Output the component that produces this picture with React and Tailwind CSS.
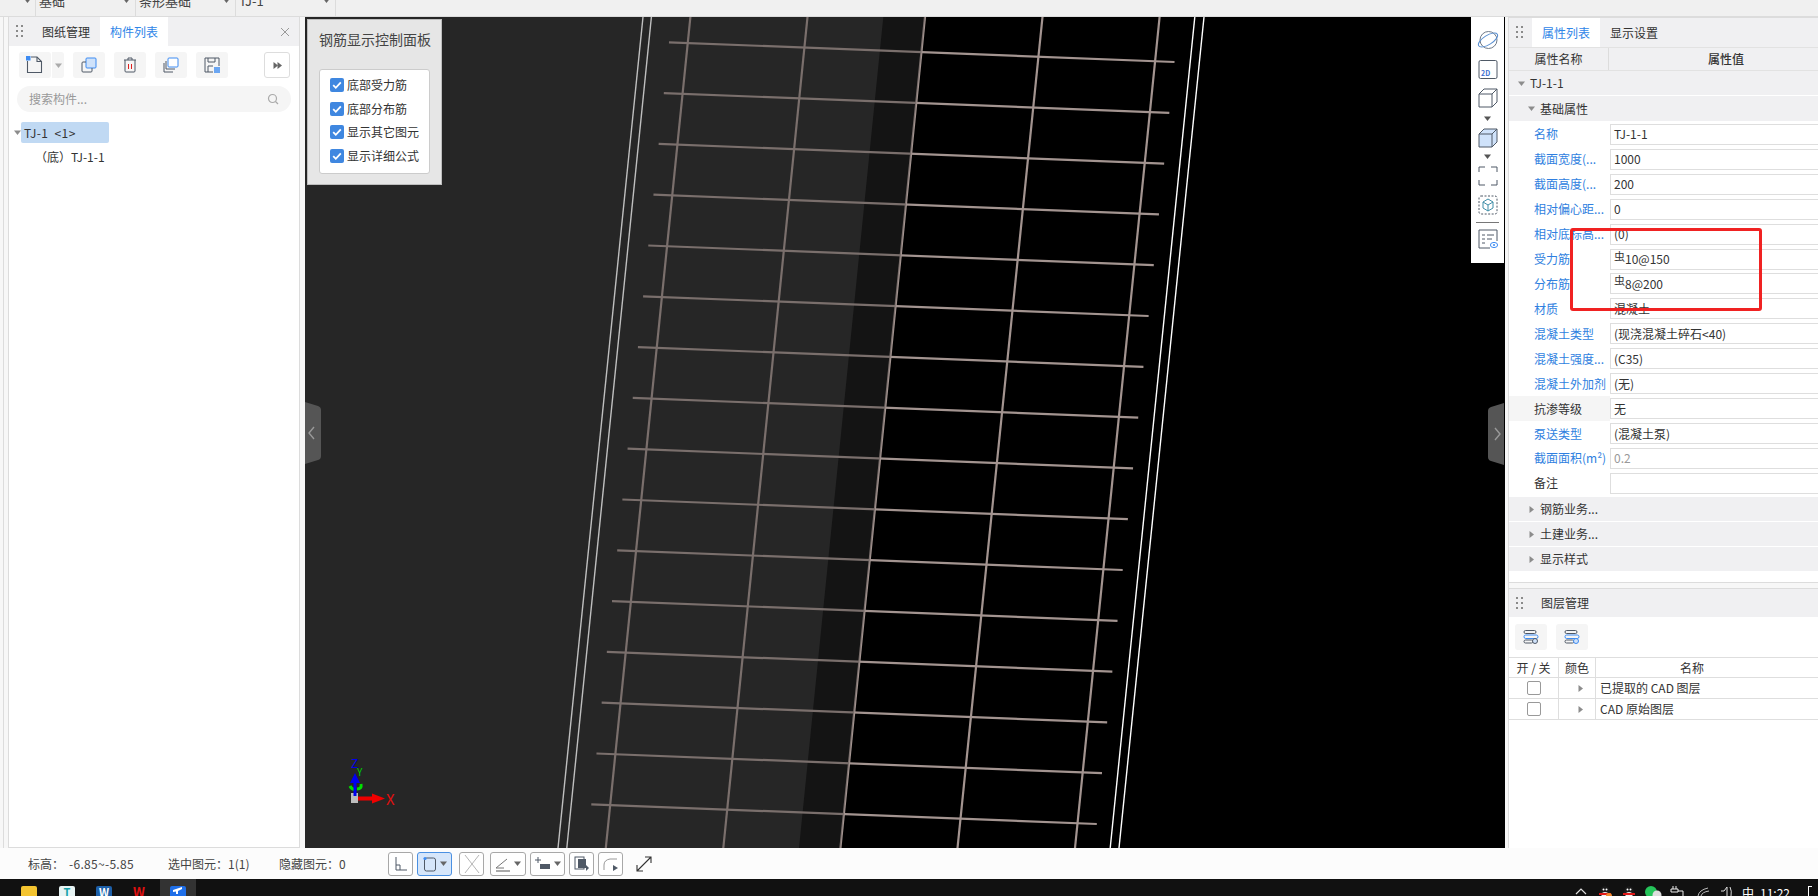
import React from 'react';

const font = { fontFamily: '"Noto Sans CJK SC", "Liberation Sans", sans-serif' };

const props = [
  { label: '名称', value: 'TJ-1-1' },
  { label: '截面宽度(...', value: '1000' },
  { label: '截面高度(...', value: '200' },
  { label: '相对偏心距...', value: '0' },
  { label: '相对底标高...', value: '(0)' },
  { label: '受力筋', value: '10@150', bar: true },
  { label: '分布筋', value: '8@200', bar: true },
  { label: '材质', value: '混凝土' },
  { label: '混凝土类型', value: '(现浇混凝土碎石<40)' },
  { label: '混凝土强度...', value: '(C35)' },
  { label: '混凝土外加剂', value: '(无)' },
  { label: '抗渗等级', value: '无', plain: true },
  { label: '泵送类型', value: '(混凝土泵)' },
  { label: '截面面积(m²)', value: '0.2', muted: true },
  { label: '备注', value: '', dark: true },
];

function Dots() {
  return (
    <svg width="7" height="13" viewBox="0 0 7 13" className="shrink-0">
      {[0, 5, 10].map((y) => (
        <g key={y} fill="#8a8a8a">
          <rect x="0" y={y} width="2" height="2" />
          <rect x="5" y={y} width="2" height="2" />
        </g>
      ))}
    </svg>
  );
}

function Caret({ dir = 'down', color = '#8c8c8c' }) {
  return (
    <svg width="7" height="7" viewBox="0 0 7 7" className="shrink-0">
      {dir === 'down' ? <path d="M0 1.5h7L3.5 6z" fill={color} /> : <path d="M1.5 0v7L6 3.5z" fill={color} />}
    </svg>
  );
}

function Check() {
  return (
    <span className="flex h-[14px] w-[14px] items-center justify-center rounded-[2px] bg-[#3f87e0]">
      <svg width="12" height="12" viewBox="0 0 12 12"><path d="M2.2 6.2l2.6 2.6 5-5.4" fill="none" stroke="#fff" strokeWidth="1.8" /></svg>
    </span>
  );
}

function ToolBtn({ children, className = 'w-[32px]' }) {
  return <div className={`flex h-[26px] items-center justify-center rounded-[3px] bg-[#f5f5f5] ${className}`}>{children}</div>;
}

function StatusBtn({ children, width, active, caret }) {
  return (
    <div
      className={`flex h-[24px] items-center justify-center gap-[3px] rounded-[3px] border ${active ? 'border-[#4a90e2] bg-[#d6e6fa]' : 'border-[#a8a8a8] bg-white'}`}
      style={{ width }}
    >
      {children}
      {caret && <Caret color="#666" />}
    </div>
  );
}

function Canvas() {
  const rebarsH = Array.from({ length: 16 }, (_, i) => i);
  const rebarsV = [
    [690.4, 605.8],
    [807.5, 723.3],
    [925, 840.4],
    [1042.5, 957.5],
    [1159.6, 1075],
  ];
  const whites = [
    [643, 558],
    [651.4, 566.8],
    [1194.8, 1110.2],
    [1204, 1119],
  ];
  return (
    <svg viewBox="305 17 1200 831" width="1200" height="831" className="block">
      <rect x="305" y="17" width="1200" height="831" fill="#000" />
      <polygon points="305,17 925,17 840.4,848 305,848" fill="#1b1b1b" />
      <polygon points="305,17 883.3,17 799,848 305,848" fill="#333" />
      {whites.map(([a, b], i) => (
        <line key={i} x1={a} y1="17" x2={b} y2="848" stroke="#fff" strokeWidth="1.4" />
      ))}
      {rebarsV.map(([a, b], i) => (
        <line key={i} x1={a} y1="17" x2={b} y2="848" stroke="#a39490" strokeWidth="2.2" />
      ))}
      {rebarsH.map((i) => (
        <line
          key={i}
          x1={669 - i * 5.18}
          y1={42.3 + i * 50.8}
          x2={1174.5 - i * 5.18}
          y2={62 + i * 50.8}
          stroke="#a39490"
          strokeWidth="2.2"
        />
      ))}
      <polygon points="305,17 925,17 840.4,848 305,848" fill="#000" opacity="0.25" />
      {/* axis gizmo */}
      <rect x="351" y="793" width="7" height="10" fill="#bdbdbd" />
      <path d="M350 786q2 4 5 3M357 789q5 0 4 -5" stroke="#00e000" strokeWidth="3" fill="none" />
      <path d="M358 796.5h14v-3l13 5-13 5v-3h-14z" fill="#f00000" />
      <path d="M353.5 796v-13h-3.5l5 -10 5 10h-3.5v13z" fill="#0000f0" />
      <text x="357" y="776" fill="#00d000" fontSize="10" style={font}>Y</text>
      <text x="351" y="768" fill="#0000f0" fontSize="12" style={font}>Z</text>
      <text x="386" y="805" fill="#e01010" fontSize="15" style={font}>X</text>
    </svg>
  );
}

function LeftPanel() {
  return (
    <div className="flex h-full w-[292px] flex-col border-x border-b border-[#dcdcdc] bg-white text-[12px] text-[#333]">
      <div className="flex h-[29px] items-center bg-[#f0f0f2] pl-[7px]">
        <Dots />
        <span className="ml-[19px]">图纸管理</span>
        <span className="ml-[10px] flex h-full w-[68px] items-center justify-center bg-white text-[#2f86e8]">构件列表</span>
        <svg width="10" height="10" viewBox="0 0 10 10" className="ml-auto mr-[9px]"><path d="M1 1l8 8M9 1l-8 8" stroke="#999" strokeWidth="1" /></svg>
      </div>
      <div className="flex items-center pl-[10px] pt-[6px]">
        <ToolBtn>
          <svg width="18" height="18" viewBox="0 0 18 18"><path d="M1.5 5v11.5h14V5.5L11 1H5" fill="none" stroke="#4f5966" strokeWidth="1.1" /><path d="M11 1v4.5h4.5" fill="none" stroke="#4f5966" strokeWidth="1.1" /><rect x="0" y="0" width="4.5" height="4.5" fill="#3d8bf2" /></svg>
        </ToolBtn>
        <div className="ml-px flex h-[26px] w-[12px] items-center justify-center rounded-r-[3px] bg-[#f5f5f5]"><Caret color="#aaa" /></div>
        <div className="ml-[9px]">
          <ToolBtn>
            <svg width="16" height="16" viewBox="0 0 16 16"><rect x="5" y="1" width="10" height="10" rx="1" fill="#cfe2fa" stroke="#3d8bf2" /><path d="M5 5H2a1 1 0 0 0-1 1v8a1 1 0 0 0 1 1h8a1 1 0 0 0 1-1v-3" fill="none" stroke="#4f5966" /></svg>
          </ToolBtn>
        </div>
        <div className="ml-[9px]">
          <ToolBtn>
            <svg width="14" height="16" viewBox="0 0 14 16"><path d="M1 3h12M5 3V1h4v2M2 3v11a1 1 0 0 0 1 1h8a1 1 0 0 0 1-1V3" fill="none" stroke="#4f5966" /><path d="M5.5 7v5M8.5 7v5" stroke="#e02020" /></svg>
          </ToolBtn>
        </div>
        <div className="ml-[9px]">
          <ToolBtn>
            <svg width="16" height="16" viewBox="0 0 16 16"><rect x="5" y="1" width="10" height="9" rx="1" fill="#fff" stroke="#3d8bf2" /><path d="M3 4v8h9M1 6v9h9" fill="none" stroke="#4f5966" /></svg>
          </ToolBtn>
        </div>
        <div className="ml-[9px]">
          <ToolBtn>
            <svg width="16" height="16" viewBox="0 0 16 16"><path d="M1 1h14v8M1 1v14h8" fill="none" stroke="#4f5966" /><path d="M4 1v4h7V1M4 15v-6h5" fill="none" stroke="#4f5966" /><rect x="10" y="10" width="6" height="6" fill="#6ba6f2" /></svg>
          </ToolBtn>
        </div>
        <div className="ml-[36px] flex h-[26px] w-[26px] items-center justify-center rounded-[3px] border border-[#ddd]">
          <Caret dir="right" color="#666" /><span className="-ml-[3px]"><Caret dir="right" color="#666" /></span>
        </div>
      </div>
      <div className="mx-[8px] mt-[8px] flex h-[26px] items-center justify-between rounded-full bg-[#f5f5f5] pl-[12px] pr-[12px] text-[#999]">
        <span>搜索构件...</span>
        <svg width="12" height="12" viewBox="0 0 12 12"><circle cx="5.5" cy="5.5" r="4" fill="none" stroke="#aaa" strokeWidth="1.2" /><path d="M8.5 8.5l2.5 2.5" stroke="#aaa" strokeWidth="1.2" /></svg>
      </div>
      <div className="mt-[10px] flex items-center pl-[5px]">
        <Caret />
        <span className="flex h-[21px] w-[88px] items-center whitespace-pre rounded-[2px] bg-[#c0d9f3] pl-[3px] tracking-[0.4px]">TJ-1  &lt;1&gt;</span>
      </div>
      <div className="mt-[3px] h-[21px] pl-[26px] leading-[21px] whitespace-pre">（底）TJ-1-1</div>
    </div>
  );
}

function RightPanel() {
  return (
    <div className="flex h-full w-[310px] flex-col border-l border-t border-[#dcdcdc] bg-white text-[12px] text-[#333]">
      <div className="flex h-[29px] shrink-0 items-center bg-[#f0f0f2] pl-[7px]">
        <Dots />
        <span className="ml-[9px] flex h-full w-[68px] items-center justify-center bg-white text-[#2f86e8]">属性列表</span>
        <span className="ml-[10px]">显示设置</span>
      </div>
      <div className="flex h-[24px] shrink-0 items-center border-y border-[#e2e2e2] bg-[#f0f0f2]">
        <span className="flex h-full w-[100px] items-center justify-center border-r border-[#dcdcdc]">属性名称</span>
        <span className="flex-1 pl-[25px] text-center font-medium">属性值</span>
      </div>
      <div className="flex h-[25px] shrink-0 items-center gap-[5px] border-b border-white bg-[#f0f0f2] pl-[9px]"><Caret />TJ-1-1</div>
      <div className="flex h-[25px] shrink-0 items-center gap-[5px] bg-[#f0f0f2] pl-[19px]"><Caret />基础属性</div>
      <div className="h-[1px] shrink-0" />
      {props.map((p) => (
        <div key={p.label} className="flex h-[24.93px] shrink-0 items-center">
          <span className={`flex h-full w-[101px] items-center whitespace-nowrap pl-[25px] ${p.plain ? 'bg-[#f5f5f5] text-[#333]' : p.dark ? 'text-[#333]' : 'text-[#2f7fe0]'}`}>{p.label}</span>
          <span className={`flex h-[21px] flex-1 items-center border border-r-0 border-[#dedede] pl-[3px] ${p.muted ? 'text-[#999]' : ''}`}>
            {p.bar && <span className="-translate-y-[3px] text-[11px] leading-none">虫</span>}
            {p.value}
          </span>
        </div>
      ))}
      <div className="h-[1.5px] shrink-0" />
      {['钢筋业务...', '土建业务...', '显示样式'].map((t) => (
        <div key={t} className="flex h-[25px] shrink-0 items-center gap-[5px] border-b border-white bg-[#f0f0f2] pl-[19px]"><Caret dir="right" />{t}</div>
      ))}
      <div className="h-[11px] shrink-0 border-b border-[#dcdcdc]" />
      <div className="h-[5px] shrink-0 bg-[#f7f7f7]" />
      <div className="flex min-h-0 flex-1 flex-col border-t border-[#dcdcdc]">
        <div className="flex h-[28px] shrink-0 items-center bg-[#f0f0f2] pl-[7px]">
          <Dots />
          <span className="ml-[18px]">图层管理</span>
        </div>
        <div className="flex h-[40px] shrink-0 items-center gap-[9px] pl-[6px]">
          {['#4f5966', '#3d8bf2'].map((c) => (
            <ToolBtn key={c}>
              <svg width="16" height="14" viewBox="0 0 16 14"><g fill="none" stroke="#4f5966"><rect x="1" y="0.5" width="12" height="3" rx="1.5" /><rect x="1" y="5" width="14" height="3.5" rx="1.7" stroke="#3d8bf2" /><rect x="1" y="10" width="9" height="3" rx="1.5" /></g><circle cx="12" cy="11" r="2.5" fill="#cfe2fa" stroke={c} /></svg>
            </ToolBtn>
          ))}
        </div>
        <div className="flex h-[21px] shrink-0 border-y border-[#dedede] leading-[19px]">
          <span className="w-[50px] border-r border-[#dedede] text-center">开 / 关</span>
          <span className="w-[37px] border-r border-[#dedede] text-center">颜色</span>
          <span className="flex-1 pr-[30px] text-center">名称</span>
        </div>
        {['已提取的 CAD 图层', 'CAD 原始图层'].map((t) => (
          <div key={t} className="flex h-[21px] shrink-0 items-center border-b border-[#dedede]">
            <span className="flex h-full w-[50px] items-center justify-center border-r border-[#dedede]">
              <span className="h-[14px] w-[14px] rounded-[2px] border border-[#999]" />
            </span>
            <span className="flex h-full w-[37px] items-center justify-end border-r border-[#dedede] pr-[11px]"><Caret dir="right" /></span>
            <span className="pl-[4px]">{t}</span>
          </div>
        ))}
      </div>
    </div>
  );
}

function ViewTools() {
  const stroke = '#4f5966';
  return (
    <div className="absolute right-[1px] top-0 flex h-[246px] w-[33px] flex-col items-center bg-white pt-[13px]">
      <svg width="24" height="20" viewBox="0 0 24 20"><circle cx="12.5" cy="10" r="8.5" fill="none" stroke="#6f7a88" /><ellipse cx="12" cy="10" rx="11" ry="4.6" transform="rotate(-32 12 10)" fill="none" stroke="#5a8fd0" /></svg>
      <svg width="20" height="19" viewBox="0 0 20 19" className="mt-[10px]"><rect x="1" y="0.5" width="18" height="18" rx="1.5" fill="none" stroke={stroke} /><text x="3" y="16" fontSize="7" fontWeight="700" fill="#3d6fd0" style={font}>2D</text></svg>
      <svg width="20" height="20" viewBox="0 0 20 20" className="mt-[9px]"><path d="M1 6h13v13H1zM1 6l5-5h13v13l-5 5M14 6l5-5" fill="none" stroke={stroke} /></svg>
      <div className="mt-[7px]"><Caret color="#555" /></div>
      <svg width="20" height="20" viewBox="0 0 20 20" className="mt-[6px]"><path d="M1 19V6l5-5h13v13l-5 5z" fill="#cfe2fa" stroke={stroke} /><path d="M1 6h13v13M14 6l5-5" fill="none" stroke={stroke} /></svg>
      <div className="mt-[5px]"><Caret color="#555" /></div>
      <svg width="20" height="20" viewBox="0 0 20 20" className="mt-[6px]"><path d="M1 6V1h6M13 1h6v5M19 14v5h-6M7 19H1v-5" fill="none" stroke={stroke} /></svg>
      <svg width="20" height="20" viewBox="0 0 20 20" className="mt-[9px]"><rect x="1" y="1" width="18" height="18" rx="2" fill="none" stroke={stroke} strokeDasharray="2 1.5" /><path d="M10 4l5 3v6l-5 3-5-3V7zM5 7l5 3 5-3M10 10v6" fill="none" stroke="#3f8ea8" /></svg>
      <div className="mt-[7px] h-px w-[23px] bg-[#777]" />
      <svg width="20" height="20" viewBox="0 0 20 20" className="mt-[6px]"><path d="M12 19H1V1h18v11" fill="none" stroke={stroke} /><path d="M4 6h3M9 6h7M4 10h3M9 10h5M4 14h3" stroke={stroke} /><ellipse cx="16" cy="16" rx="3.6" ry="2.6" fill="#fff" stroke="#3d8bf2" /><circle cx="16" cy="16" r="1" fill="#3d8bf2" /></svg>
    </div>
  );
}

function TaskIcon({ color, children, className = '' }) {
  return <span className={`flex h-[16px] w-[16px] justify-center rounded-[2px] text-[11px] font-bold leading-[12px] ${color} ${className}`}>{children}</span>;
}

function Penguin({ badge }) {
  return (
    <svg width="14" height="12" viewBox="0 0 14 12" className="shrink-0">
      <ellipse cx="7" cy="6" rx="5" ry="6" fill="#1a1a1a" />
      <ellipse cx="7" cy="9" rx="3.5" ry="3" fill="#eee" />
      <circle cx="5.5" cy="3.5" r="1" fill="#fff" />
      <circle cx="8.5" cy="3.5" r="1" fill="#fff" />
      <path d="M1 7h12v2H1z" fill="#e01818" />
      {badge && <circle cx="11" cy="10" r="3" fill="#f08a30" />}
    </svg>
  );
}

export default function App() {
  return (
    <div className="relative flex h-[896px] w-[1818px] flex-col overflow-hidden bg-[#fafafa]" style={font}>
      {/* top combo strip, cut off by the screenshot */}
      <div className="relative flex h-[17px] shrink-0 overflow-hidden border-b border-[#dcdcdc] bg-[#f0f0f0] pl-[35px] text-[13px] text-[#444]">
        <span className="absolute left-[24px] -top-[3px]"><Caret color="#666" /></span>
        {['基础', '条形基础', 'TJ-1'].map((t) => (
          <div key={t} className="relative flex w-[100px] border-l border-[#dcdcdc] pl-[3px]">
            <span className="-mt-[8px] leading-[18px]">{t}</span>
            <span className="absolute right-[5px] -top-[3px]"><Caret color="#666" /></span>
          </div>
        ))}
        <div className="border-l border-[#dcdcdc]" />
      </div>

      <div className="flex h-[831px] shrink-0">
        <div className="w-[8px] shrink-0 bg-[#f7f7f7]">
          <div className="h-full w-[4px] border-r border-[#dcdcdc]" />
        </div>
        <LeftPanel />
        <div className="w-[5px] shrink-0 bg-[#f7f7f7]" />
        <div className="relative h-full w-[1200px] shrink-0">
          <Canvas />
          <div className="absolute left-[2px] top-[2px] flex h-[166px] w-[135px] flex-col border border-[#bdbdbd] bg-[#e6e6e6] pl-[11px]">
            <div className="mt-[9px] text-[14px] leading-[21px] text-[#444]">钢筋显示控制面板</div>
            <div className="mt-[19px] flex h-[105px] w-[111px] flex-col justify-between rounded-[3px] border border-[#ccc] bg-white pb-[8px] pl-[10px] pt-[6px] text-[12px] text-[#333]">
              {['底部受力筋', '底部分布筋', '显示其它图元', '显示详细公式'].map((t) => (
                <div key={t} className="flex items-center gap-[3px] leading-[18px] whitespace-nowrap"><Check />{t}</div>
              ))}
            </div>
          </div>
          <svg width="16" height="62" viewBox="0 0 16 62" className="absolute left-0 top-[385px]">
            <path d="M0 0l13 4q3 1 3 4v46q0 3-3 4L0 62z" fill="#555" />
            <path d="M9 25l-5 6 5 6" fill="none" stroke="#999" strokeWidth="1.4" />
          </svg>
          <svg width="16" height="62" viewBox="0 0 16 62" className="absolute right-[1px] top-[386px]">
            <path d="M16 0L3 4q-3 1-3 4v46q0 3 3 4l13 4z" fill="#555" />
            <path d="M7 25l5 6-5 6" fill="none" stroke="#999" strokeWidth="1.4" />
          </svg>
          <ViewTools />
        </div>
        <div className="w-[3px] shrink-0 bg-[#f7f7f7]" />
        <RightPanel />
      </div>

      {/* status bar */}
      <div className="flex h-[31px] shrink-0 items-center bg-[#fcfcfc] pl-[28px] text-[12px] text-[#444]">
        <span className="w-[41px]">标高：</span>
        <span className="w-[99px] tracking-[0.3px]">-6.85~-5.85</span>
        <span className="w-[111px]">选中图元：1(1)</span>
        <span className="w-[109px]">隐藏图元：0</span>
        <div className="flex items-center gap-[4px]">
          <StatusBtn width={25}>
            <svg width="14" height="16" viewBox="0 0 14 16"><path d="M2 1v13h11M2 9h4v5" fill="none" stroke="#4f5966" /></svg>
          </StatusBtn>
          <StatusBtn width={35} active caret>
            <svg width="14" height="16" viewBox="0 0 14 16"><rect x="1.5" y="2" width="11" height="13" rx="2" fill="none" stroke="#4f5966" /><circle cx="2" cy="2.5" r="1.6" fill="#3d8bf2" /></svg>
          </StatusBtn>
          <div className="ml-[3px]">
            <StatusBtn width={25}>
              <svg width="20" height="20" viewBox="0 0 20 20"><path d="M3 1l14 18M17 1L3 19" stroke="#b5b5b5" /></svg>
            </StatusBtn>
          </div>
          <div className="ml-[2px]">
            <StatusBtn width={36} caret>
              <svg width="16" height="16" viewBox="0 0 16 16"><path d="M1 12L12 3M1 12h8" fill="none" stroke="#777" /><path d="M1 15h14" stroke="#aaa" strokeWidth="2" /></svg>
            </StatusBtn>
          </div>
          <StatusBtn width={35} caret>
            <svg width="16" height="14" viewBox="0 0 16 14"><path d="M3 0v6M0 3h6" stroke="#4f5966" /><rect x="5" y="7" width="10" height="5" fill="#4f5966" /></svg>
          </StatusBtn>
          <StatusBtn width={25}>
            <svg width="16" height="16" viewBox="0 0 16 16"><rect x="1" y="1" width="9" height="12" fill="none" stroke="#4f5966" /><rect x="4" y="3" width="8" height="9" fill="#4f5966" /><path d="M12 9l3 3-3 3z" fill="#4f5966" /></svg>
          </StatusBtn>
          <StatusBtn width={25}>
            <svg width="18" height="16" viewBox="0 0 18 16"><path d="M2 14V9q0-5 6-6h7" fill="none" stroke="#999" /><path d="M11 9l5 3-5 3z" fill="#4f5966" /></svg>
          </StatusBtn>
          <svg width="16" height="16" viewBox="0 0 16 16" className="ml-[9px]"><path d="M1 15L15 1M9 1h6v6M1 9v6h6" fill="none" stroke="#333" strokeWidth="1.1" /></svg>
        </div>
      </div>

      {/* windows taskbar, cut off by the screenshot */}
      <div className="flex h-[17px] shrink-0 overflow-hidden bg-[#111] text-white">
        <div className="flex items-start pl-[21px] pt-[7px]">
          <TaskIcon color="bg-[#f4c430] text-[#3a7fd0]" />
          <TaskIcon color="bg-[#e8f4f4] text-[#16a0a8]" className="ml-[22px]">T</TaskIcon>
          <TaskIcon color="bg-[#1d5fa8] text-white" className="ml-[21px]">W</TaskIcon>
          <span className="ml-[21px] w-[16px] text-[13px] font-bold leading-[12px] text-[#e01010]">W</span>
        </div>
        <div className="ml-[11px] flex h-full w-[36px] justify-center bg-[#333] pt-[7px]">
          <TaskIcon color="bg-[#1f6fe8]">
            <svg width="12" height="8" viewBox="0 0 12 8"><path d="M1 4l9-3v2l-4 2v3H4V5.5L1 6z" fill="#fff" /></svg>
          </TaskIcon>
        </div>
        <div className="relative ml-auto flex w-[243px] items-start pt-[7px] text-[12px] leading-[14px]">
          <svg width="12" height="8" viewBox="0 0 12 8" className="mt-[1px] shrink-0"><path d="M1 7l5-5 5 5" fill="none" stroke="#ddd" strokeWidth="1.2" /></svg>
          <span className="ml-[11px]"><Penguin badge /></span>
          <span className="ml-[10px]"><Penguin /></span>
          <svg width="17" height="12" viewBox="0 0 17 12" className="ml-[9px] shrink-0"><circle cx="6" cy="6" r="6" fill="#25c45a" /><circle cx="12" cy="9" r="4.5" fill="#ddd" /></svg>
          <svg width="14" height="10" viewBox="0 0 14 10" className="ml-[8px] shrink-0"><path d="M3 0v3M6 0v3M1 3h7v3H1zM8 5h5v5" fill="none" stroke="#eee" /></svg>
          <svg width="14" height="10" viewBox="0 0 14 10" className="ml-[13px] shrink-0"><path d="M1 10q1-6 10-8M4 10q1-4 8-5" fill="none" stroke="#bbb" /></svg>
          <svg width="14" height="10" viewBox="0 0 14 10" className="ml-[9px] shrink-0"><path d="M1 5h3l3-4v9M10 1q2 4 1 9" fill="none" stroke="#ddd" /></svg>
          <span className="ml-[8px]">中</span>
          <span className="ml-[6px]">11:22</span>
          <span className="ml-[18px] h-[14px] w-[4px] border-l border-t border-white" />
        </div>
      </div>

      {/* hand-drawn markup on the screenshot */}
      <div className="pointer-events-none absolute left-[1570px] top-[228px] h-[83px] w-[192px] rounded-[3px] border-[3px] border-[#f02222]" />
    </div>
  );
}
